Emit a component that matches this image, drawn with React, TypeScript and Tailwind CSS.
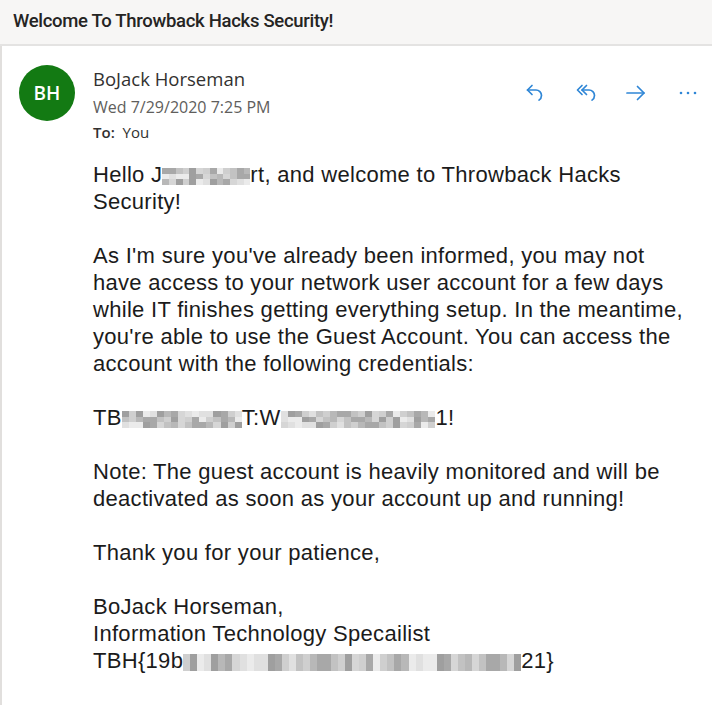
import React from "react";

const shades = [
  "bg-[#cfcfcf]",
  "bg-[#b8b8b8]",
  "bg-[#e0e0e0]",
  "bg-[#a8a8a8]",
  "bg-[#ebebeb]",
  "bg-[#c2c2c2]",
  "bg-[#d6d6d6]",
  "bg-[#9f9f9f]",
];

// pixelated redaction block
const Blur = ({ w, seed = 1 }: { w: number; seed?: number }) => {
  const cols = Math.max(1, Math.round(w / 7));
  const cells = [];
  let s = seed * 7 + 3;
  for (let r = 0; r < 3; r++) {
    for (let c = 0; c < cols; c++) {
      s = (s * 31 + 17) % 97;
      cells.push(<span key={r + "-" + c} className={"block " + shades[s % shades.length]} />);
    }
  }
  return (
    <span className="inline-block overflow-hidden align-[-3px] h-[17px] leading-none" style={{ width: w }}>
      <span
        className="grid w-full h-full"
        style={{ gridTemplateColumns: `repeat(${cols}, 1fr)`, gridTemplateRows: "repeat(3, 1fr)" }}
      >
        {cells}
      </span>
    </span>
  );
};

const IconReply = () => (
  <svg width="24" height="24" viewBox="0 0 24 24" fill="none" stroke="currentColor" strokeWidth="1.7" strokeLinecap="round" strokeLinejoin="round">
    <path d="M9 4.5 4.5 9 9 13.5" />
    <path d="M4.5 9h8.5a5.5 5.5 0 0 1 5.5 5.5 5.5 5.5 0 0 1-2.5 4.6" />
  </svg>
);

const IconReplyAll = () => (
  <svg width="24" height="24" viewBox="0 0 24 24" fill="none" stroke="currentColor" strokeWidth="1.7" strokeLinecap="round" strokeLinejoin="round">
    <path d="M7 4.5 2.5 9 7 13.5" />
    <path d="M11.5 4.5 7 9l4.5 4.5" />
    <path d="M7 9h7a5.5 5.5 0 0 1 5.5 5.5 5.5 5.5 0 0 1-2.5 4.6" />
  </svg>
);

const IconForward = () => (
  <svg width="24" height="24" viewBox="0 0 24 24" fill="none" stroke="currentColor" strokeWidth="1.7" strokeLinecap="round" strokeLinejoin="round">
    <path d="M3 12h17" />
    <path d="M13.5 5.5 20 12l-6.5 6.5" />
  </svg>
);

const IconMore = () => (
  <svg width="24" height="24" viewBox="0 0 24 24" fill="currentColor">
    <circle cx="5" cy="12" r="1.3" />
    <circle cx="12" cy="12" r="1.3" />
    <circle cx="19" cy="12" r="1.3" />
  </svg>
);

export default function App() {
  return (
    <div className="w-[712px] h-[705px] overflow-hidden bg-white flex flex-col">
      <header className="h-[46px] shrink-0 bg-[#f7f6f5] border-b-2 border-[#e4e3e2] px-[13px] flex items-center">
        <h1 className="font-['Roboto',sans-serif] text-[18.5px] font-medium text-[#252423] tracking-[-0.3px]">
          Welcome To Throwback Hacks Security!
        </h1>
      </header>

      <main className="flex-1 border-l-2 border-[#e1dfdd] flex pl-[17px] pt-[19px]">
        <div className="w-[56px] h-[56px] shrink-0 rounded-full bg-[#137a13] flex items-center justify-center font-['Open_Sans',sans-serif] text-[19px] font-semibold text-white">
          BH
        </div>

        <div className="flex-1 pl-[18px] pr-[12px]">
          <div className="flex justify-between">
            <div className="font-['Open_Sans',sans-serif] pt-[1px]">
              <div className="text-[18.5px] leading-[24px] mt-[1px] text-[#323130]">BoJack Horseman</div>
              <div className="text-[16px] leading-[22px] mt-[5px] text-[#605e5c]">Wed 7/29/2020 7:25 PM</div>
              <div className="text-[15px] leading-[20px] mt-[4px] text-[#323130]">
                <span className="font-semibold">To:</span>&nbsp; You
              </div>
            </div>
            <div className="flex items-center text-[#2f86d6] h-[24px] mt-[16px]">
              <IconReply />
              <span className="ml-[28px]">
                <IconReplyAll />
              </span>
              <span className="ml-[25px]">
                <IconForward />
              </span>
              <span className="ml-[28px]">
                <IconMore />
              </span>
            </div>
          </div>

          <div className="mt-[19px] font-['Liberation_Sans',Arial,sans-serif] text-[22px] leading-[27px] tracking-[0.3px] text-[#1b1b1b] whitespace-nowrap">
            <p>
              Hello J<Blur w={88} seed={2} />rt, and welcome to Throwback Hacks
              <br />
              Security!
            </p>
            <p className="mt-[27px]">
              As I'm sure you've already been informed, you may not
              <br />
              have access to your network user account for a few days
              <br />
              while IT finishes getting everything setup. In the meantime,
              <br />
              you're able to use the Guest Account. You can access the
              <br />
              account with the following credentials:
            </p>
            <p className="mt-[27px]">
              TB<Blur w={120} seed={5} />T:W<Blur w={155} seed={9} />1!
            </p>
            <p className="mt-[27px]">
              Note: The guest account is heavily monitored and will be
              <br />
              deactivated as soon as your account up and running!
            </p>
            <p className="mt-[27px]">Thank you for your patience,</p>
            <p className="mt-[27px]">
              BoJack Horseman,
              <br />
              Information Technology Specailist
              <br />
              TBH{"{"}19b<Blur w={338} seed={4} />21{"}"}
            </p>
          </div>
        </div>
      </main>
    </div>
  );
}
